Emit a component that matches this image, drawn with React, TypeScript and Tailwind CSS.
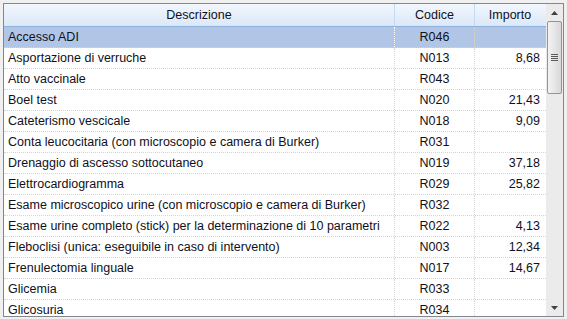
import React from 'react'

type Voce = { descrizione: string; codice: string; importo?: string }

const voci: Voce[] = [
  { descrizione: 'Accesso ADI', codice: 'R046' },
  { descrizione: 'Asportazione di verruche', codice: 'N013', importo: '8,68' },
  { descrizione: 'Atto vaccinale', codice: 'R043' },
  { descrizione: 'Boel test', codice: 'N020', importo: '21,43' },
  { descrizione: 'Cateterismo vescicale', codice: 'N018', importo: '9,09' },
  { descrizione: 'Conta leucocitaria (con microscopio e camera di Burker)', codice: 'R031' },
  { descrizione: 'Drenaggio di ascesso sottocutaneo', codice: 'N019', importo: '37,18' },
  { descrizione: 'Elettrocardiogramma', codice: 'R029', importo: '25,82' },
  { descrizione: 'Esame microscopico urine (con microscopio e camera di Burker)', codice: 'R032' },
  { descrizione: 'Esame urine completo (stick) per la determinazione di 10 parametri', codice: 'R022', importo: '4,13' },
  { descrizione: 'Fleboclisi (unica: eseguibile in caso di intervento)', codice: 'N003', importo: '12,34' },
  { descrizione: 'Frenulectomia linguale', codice: 'N017', importo: '14,67' },
  { descrizione: 'Glicemia', codice: 'R033' },
  { descrizione: 'Glicosuria', codice: 'R034' },
]

const dotted = 'border-dotted border-[#d6d6d0]'

export default function App() {
  return (
    <div className="h-[319px] w-[567px] bg-[#f0f0f0] p-[3px] text-[12.5px] text-[#10101c]" style={{ fontFamily: '"Liberation Sans", Arial, sans-serif' }}>
      <div className="flex h-[314px] overflow-hidden border border-[#828790] bg-white">
        {/* list */}
        <div className="flex w-[542px] flex-col">
          <div className="flex h-[23px] shrink-0 border-b border-[#8fb2dc] bg-gradient-to-b from-[#f2f7fd] to-[#dbe8f8]">
            <div className="flex w-[391px] items-center justify-center border-r border-[#c4d8f0]">Descrizione</div>
            <div className="flex w-[80px] items-center justify-center border-r border-[#c4d8f0]">Codice</div>
            <div className="flex w-[70px] items-center justify-center">Importo</div>
          </div>
          {voci.map((v, i) => (
            <div
              key={v.codice}
              className={`flex h-[21px] shrink-0 border-b ${dotted} ${i === 0 ? 'bg-[#b1c6e6]' : ''}`}
            >
              <div className={`flex w-[391px] items-center border-r ${dotted} ${i === 0 ? 'border-white' : ''} pl-[4px]`}>{v.descrizione}</div>
              <div className={`flex w-[80px] items-center justify-center border-r ${dotted}`}>{v.codice}</div>
              <div className="flex w-[70px] items-center justify-end pr-[5px]">{v.importo}</div>
            </div>
          ))}
        </div>

        {/* vertical scrollbar */}
        <div className="flex w-[17px] flex-col bg-[#ebebeb]">
          <div className="flex h-[17px] items-center justify-center">
            <svg width="7" height="4" viewBox="0 0 7 4">
              <path d="M3.5 0 L7 4 L0 4 Z" fill="#404040" />
            </svg>
          </div>
          <div className="mx-[1px] flex h-[73px] items-center justify-center rounded-[2px] border border-[#959595] bg-gradient-to-r from-[#f3f3f3] via-[#e6e6e6] to-[#d8d8d8]">
            <div className="flex flex-col gap-[1px]">
              <div className="h-[1px] w-[7px] bg-[#5a5a5a]" />
              <div className="h-[1px] w-[7px] bg-[#5a5a5a]" />
              <div className="h-[1px] w-[7px] bg-[#5a5a5a]" />
              <div className="h-[1px] w-[7px] bg-[#5a5a5a]" />
            </div>
          </div>
          <div className="flex-1" />
          <div className="flex h-[17px] items-center justify-center">
            <svg width="7" height="4" viewBox="0 0 7 4">
              <path d="M0 0 L7 0 L3.5 4 Z" fill="#404040" />
            </svg>
          </div>
        </div>
      </div>
    </div>
  )
}
